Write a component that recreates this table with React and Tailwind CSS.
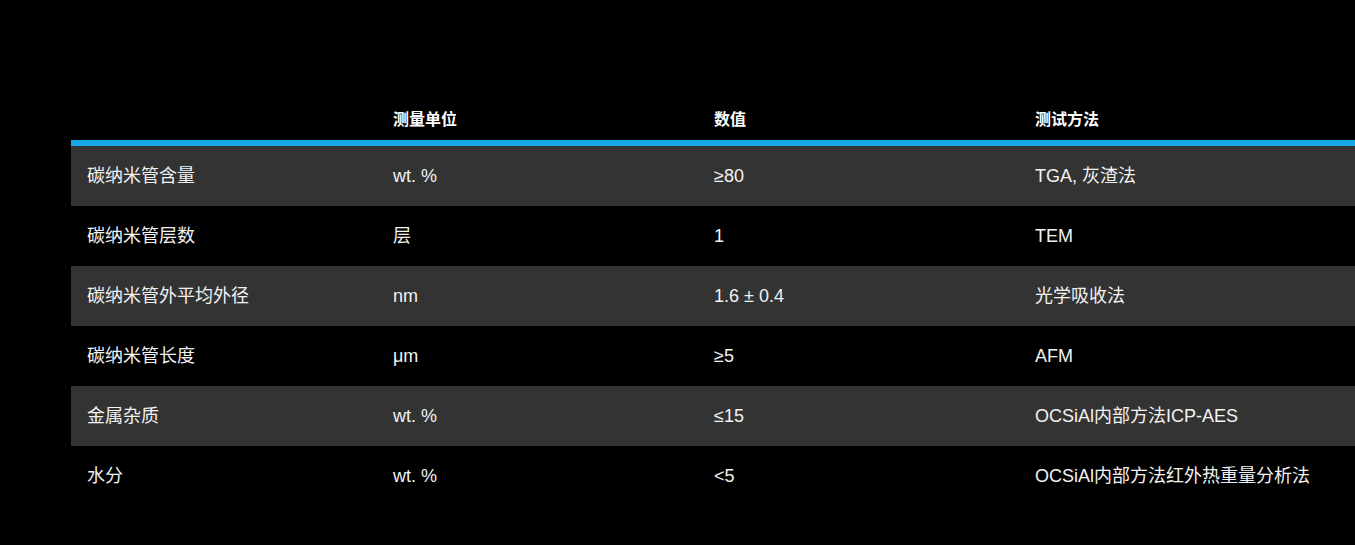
import React from "react";

const rows = [
  ["碳纳米管含量", "wt. %", "≥80", "TGA, 灰渣法"],
  ["碳纳米管层数", "层", "1", "TEM"],
  ["碳纳米管外平均外径", "nm", "1.6 ± 0.4", "光学吸收法"],
  ["碳纳米管长度", "μm", "≥5", "AFM"],
  ["金属杂质", "wt. %", "≤15", "OCSiAl内部方法ICP-AES"],
  ["水分", "wt. %", "<5", "OCSiAl内部方法红外热重量分析法"],
];

const cols = ["w-[306px]", "w-[321px]", "w-[321px]", "flex-1"];

const App = () => {
  return (
    <div
      className="w-[1355px] h-[545px] bg-black overflow-hidden text-white"
      style={{ fontFamily: '"Liberation Sans", "Noto Sans CJK SC", sans-serif' }}
    >
      <div className="ml-[71px] pt-[100px]">
        <div className="flex h-[40px] items-center border-b-[6px] border-[#14a8e6] box-content">
          {["", "测量单位", "数值", "测试方法"].map((h, i) => (
            <div key={i} className={`${cols[i]} pl-4 text-[16px] font-bold`}>
              {h}
            </div>
          ))}
        </div>
        {rows.map((r, i) => (
          <div
            key={i}
            className={`flex h-[60px] items-center ${i % 2 === 0 ? "bg-[#333333]" : "bg-black"}`}
          >
            {r.map((c, j) => (
              <div key={j} className={`${cols[j]} pl-4 text-[18px] text-[#f2f2f2]`}>
                {c}
              </div>
            ))}
          </div>
        ))}
      </div>
    </div>
  );
};

export default App;
